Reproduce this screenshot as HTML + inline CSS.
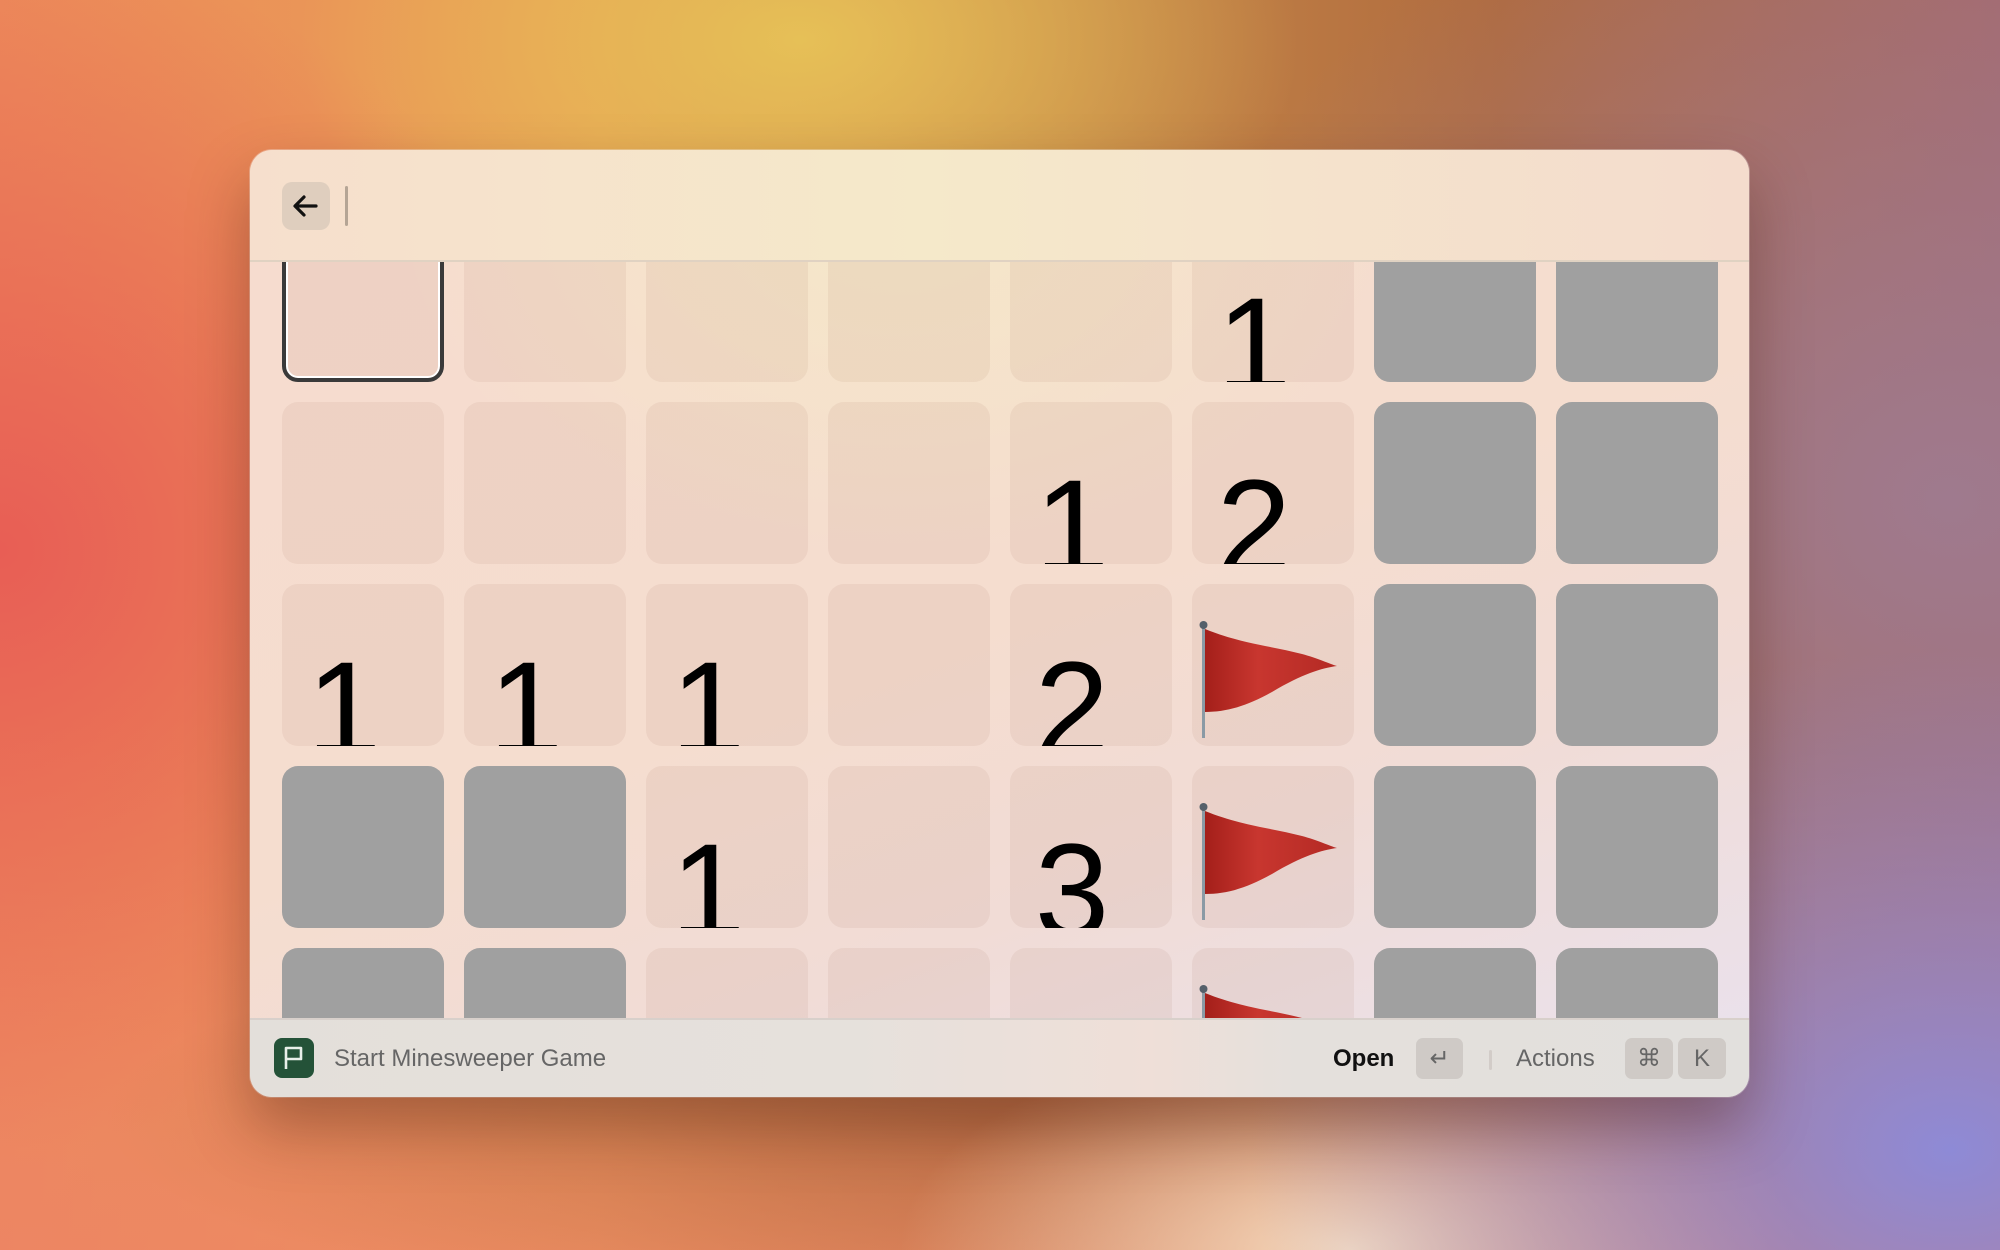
<!DOCTYPE html>
<html><head><meta charset="utf-8"><style>
html,body{margin:0;padding:0;width:2000px;height:1250px;overflow:hidden;font-family:"Liberation Sans",sans-serif}
body{background:
radial-gradient(ellipse 500px 300px at 800px 40px,#e6c057 0%,rgba(230,192,87,0) 100%),
radial-gradient(ellipse 700px 500px at 1950px 1150px,#8e8ad6 0%,rgba(142,138,214,0) 100%),
radial-gradient(ellipse 450px 220px at 1350px 1250px,#f6dcc0 0%,rgba(246,220,192,0) 100%),
radial-gradient(ellipse 900px 200px at 1000px 1120px,rgba(150,80,50,.45) 0%,rgba(150,80,50,0) 100%),
radial-gradient(ellipse 600px 600px at 0px 550px,#e85e55 0%,rgba(232,94,85,0) 100%),
radial-gradient(ellipse 800px 700px at 1950px 500px,#9f7a8e 0%,rgba(159,122,142,0) 100%),
linear-gradient(180deg,rgba(0,0,0,0) 60%,rgba(238,130,105,.6) 100%),
linear-gradient(90deg,#ec8a5a 0%,#e9a055 30%,#c98b4a 50%,#b06b3e 75%,#a5686a 100%);}
.win{position:absolute;left:250px;top:150px;width:1499px;height:947px;border-radius:22px;overflow:hidden;
background:
radial-gradient(ellipse 500px 350px at 650px 60px,#f5e8c8 0%,rgba(245,232,200,0) 100%),
linear-gradient(160deg,#f6dccf 0%,#f5ddcf 50%,#f1dcd6 70%,#e9e2ef 100%);
box-shadow:0 30px 60px rgba(60,20,10,.35),0 0 0 1px rgba(255,255,255,.3)}
.hdr{position:absolute;left:0;top:0;width:100%;height:110px;border-bottom:2px solid #e0d2c2;
background:linear-gradient(90deg,#f6dfcd 0%,#f5e9ca 45%,#f5e4cc 65%,#f4dccd 100%)}
.back{position:absolute;left:32px;top:32px;width:48px;height:48px;border-radius:10px;background:#dfcebe}
.caret{position:absolute;left:95px;top:36px;width:3px;height:40px;background:#b5a595;border-radius:2px}
.grid{position:absolute;left:0;top:112px;width:100%;height:756px;overflow:hidden}
.c{position:absolute;width:162px;height:162px;border-radius:16px;background:rgba(170,130,110,.11);overflow:hidden}
.g{background:#a0a0a0}
.sel{box-sizing:border-box;border:4px solid #3a3a3a;box-shadow:inset 0 0 0 2px #fff}
.n{position:absolute;left:62px;transform:translateX(-50%);font-size:134px;line-height:1;top:59px;color:#000}
.ftr{position:absolute;left:0;top:868px;width:100%;height:79px;border-top:2px solid #d8d0cb;
background:linear-gradient(90deg,#e3dfda 0%,#e6e1dc 40%,#efdfd8 60%,#e4e0dc 70%,#e2e0dd 100%)}
.ft{position:absolute;font-size:24px;top:25px}
.key{position:absolute;top:18px;height:41px;border-radius:7px;background:#cfcac6;color:#666;font-size:24px;text-align:center;line-height:41px}
</style></head><body>
<div class="win">
 <div class="hdr">
  <div class="back"><svg width="48" height="48" viewBox="0 0 48 48"><path d="M34 24H14M22 15l-9 9 9 9" fill="none" stroke="#111" stroke-width="3.2" stroke-linecap="round" stroke-linejoin="round"/></svg></div>
  <div class="caret"></div>
 </div>
 <div class="grid" id="g"></div>
 <div class="ftr">
  <svg style="position:absolute;left:24px;top:18px" width="40" height="40" viewBox="0 0 40 40"><rect width="40" height="40" rx="8" fill="#245238"/><path d="M12 31V10h15v11H12" fill="none" stroke="#e8efe9" stroke-width="2.6" stroke-linejoin="round"/></svg>
  <div class="ft" style="left:84px;color:#666">Start Minesweeper Game</div>
  <div class="ft" style="left:1083px;color:#111;font-weight:bold">Open</div>
  <div class="key" style="left:1166px;width:47px">↵</div>
  <div style="position:absolute;left:1239px;top:30px;width:3px;height:20px;background:#d2ccc8;border-radius:2px"></div>
  <div class="ft" style="left:1266px;color:#666">Actions</div>
  <div class="key" style="left:1375px;width:48px">⌘</div>
  <div class="key" style="left:1428px;width:48px">K</div>
 </div>
</div>
<script>
var rows=[["s","","","","","1","g","g"],["","","","","1","2","g","g"],["1","1","1","","2","f","g","g"],["g","g","1","","3","f","g","g"],["g","g","2","1","2","f","g","g"]];
var flag='<svg width="162" height="162" viewBox="0 0 162 162" style="position:absolute;left:0;top:0"><defs><linearGradient id="fl" x1="0" y1="0" x2="1" y2="0"><stop offset="0" stop-color="#a41f1a"/><stop offset=".4" stop-color="#c8362f"/><stop offset="1" stop-color="#b42a24"/></linearGradient></defs><path d="M13 45C50 60 80 62 110 70C125 74 138 80 145 82C130 84 110 90 80 108C55 122 35 128 13 128Z" fill="url(#fl)"/><rect x="10" y="42" width="3" height="112" fill="#8a9aa5"/><circle cx="11.5" cy="41" r="4" fill="#55606a"/></svg>';
var h='';
for(var r=0;r<rows.length;r++)for(var c=0;c<8;c++){var v=rows[r][c];var x=32+182*c,y=-42+182*r;
var cls='c'+(v=='g'?' g':'')+(v=='s'?' sel':'');var inner='';
if(/\d/.test(v))inner='<span class="n">'+v+'</span>';if(v=='f')inner=flag;
h+='<div class="'+cls+'" style="left:'+x+'px;top:'+y+'px">'+inner+'</div>';}
document.getElementById('g').innerHTML=h;
</script>
</body></html>
